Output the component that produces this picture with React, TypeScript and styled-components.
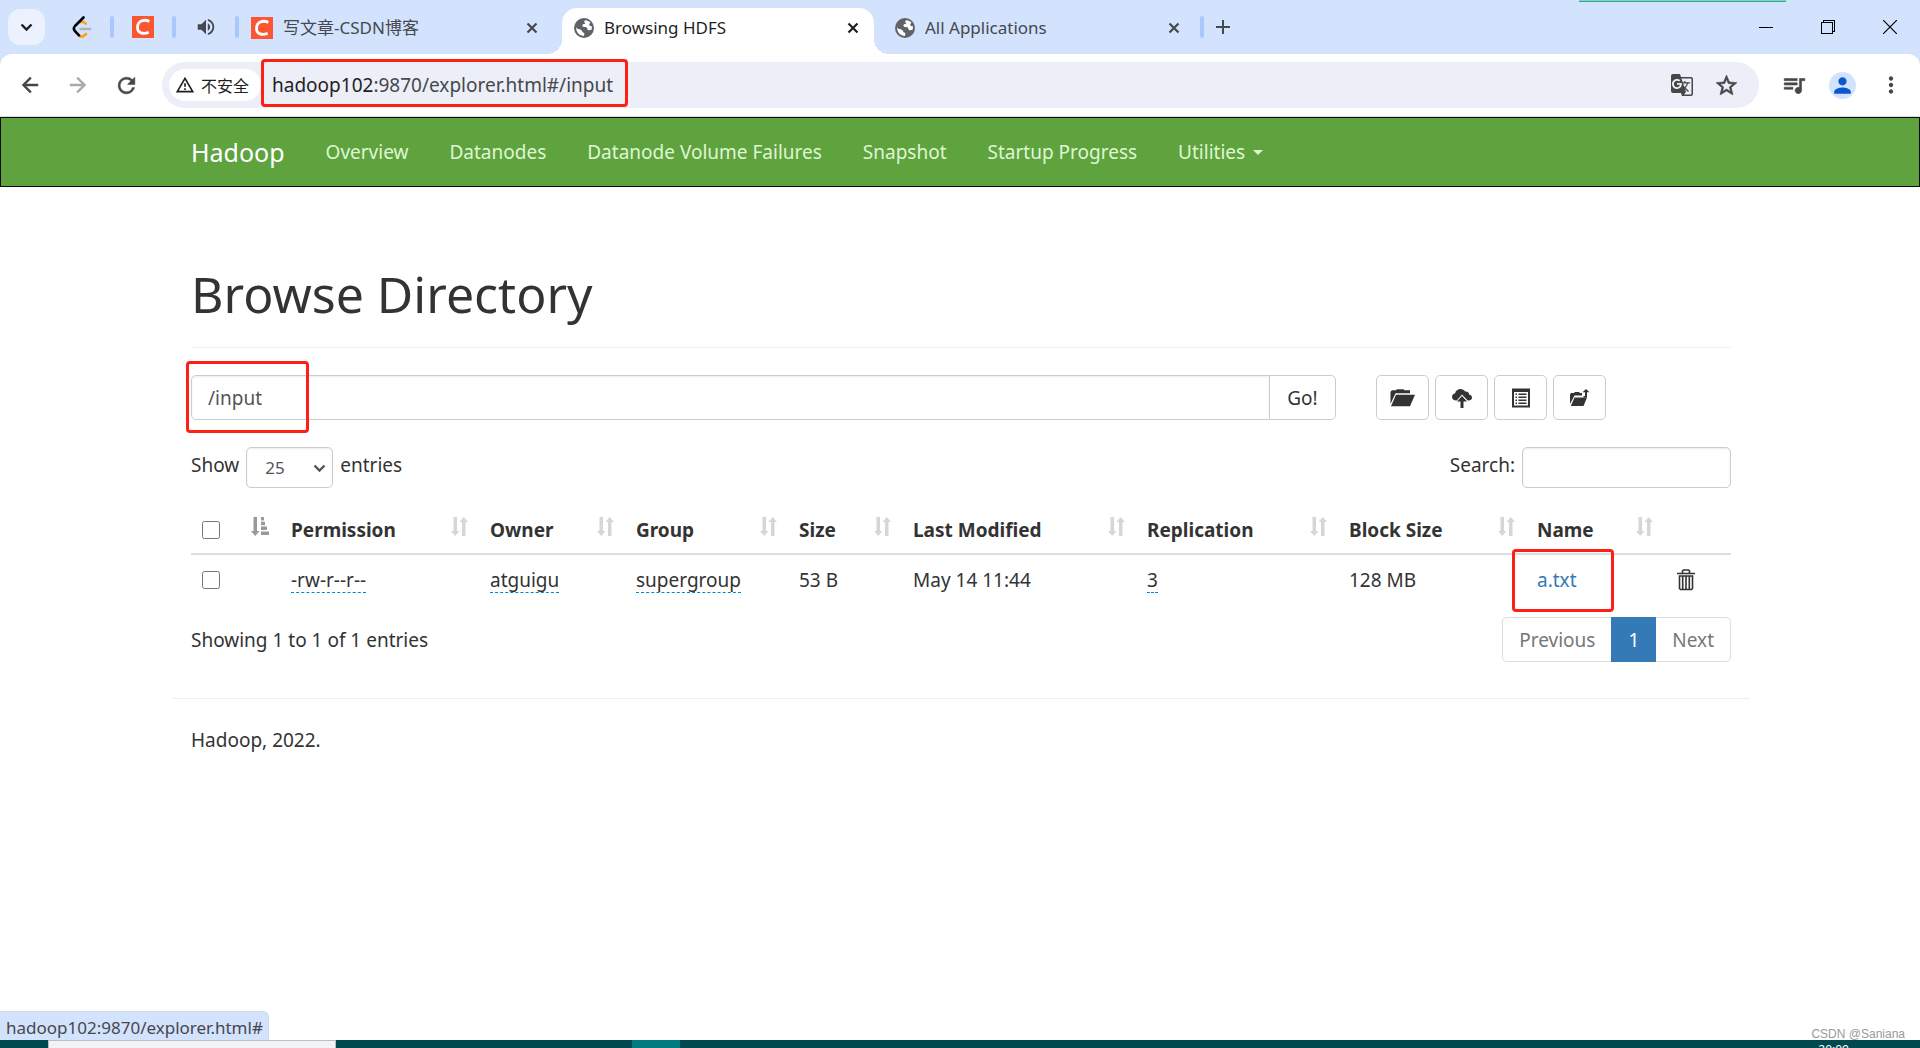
import React from "react";
import styled, { createGlobalStyle } from "styled-components";
import {
  MdArrowBack,
  MdArrowForward,
  MdGTranslate,
  MdMoreVert,
  MdOutlineWarningAmber,
  MdPerson,
  MdQueueMusic,
  MdRefresh,
  MdStarBorder,
  MdVolumeUp,
} from "react-icons/md";

const sans = `"Noto Sans", "Noto Sans CJK SC", sans-serif`;
const cjk = `"Noto Sans CJK SC", "Noto Sans", sans-serif`;

const GlobalStyle = createGlobalStyle`
  * { box-sizing: border-box; }
  body { margin: 0; background: #fff; color: #333; font: 19px/28px ${sans}; }
  button, input, select { font: inherit; color: inherit; margin: 0; }
  a { text-decoration: none; color: inherit; }
  svg { display: block; flex: none; }
`;

const Screen = styled.div`
  position: relative;
  display: flex;
  flex-direction: column;
  min-height: 100vh;
  overflow: hidden;
`;

/* ---------- browser chrome ---------- */

const BareButton = styled.button`
  display: flex;
  align-items: center;
  justify-content: center;
  flex: none;
  width: 24px;
  height: 24px;
  padding: 0;
  border: 0;
  background: none;
  /* the icon set's invisible bounding square must not pick up the stroke */
  path[fill="none"] {
    stroke: none;
  }
`;

const TabStrip = styled.div`
  position: relative;
  display: flex;
  align-items: flex-end;
  height: 54px;
  background: #d3e2fd;
  color: #45484c;
  font-size: 17px;
  line-height: 24px;
`;

const RecentTile = styled.a`
  position: absolute;
  top: 0;
  right: 134px;
  width: 207px;
  height: 2px;
  background: #6adfc0;
  border-bottom: 1px solid #4d9f8b;
`;

const TabSearch = styled(BareButton)`
  width: 37px;
  height: 36px;
  margin: 0 0 9px 8px;
  border-radius: 12px;
  background: #ebf2fe;
  color: #1c1d1f;
`;

const PinnedTab = styled.button<{ $width: number; $start?: number }>`
  display: flex;
  align-items: center;
  justify-content: center;
  width: ${(p) => p.$width}px;
  height: 54px;
  padding: 0 0 0 ${(p) => p.$start ?? 0}px;
  border: 0;
  background: none;
`;

const Divider = styled.span`
  width: 4px;
  height: 22px;
  margin-bottom: 16px;
  border-radius: 2px;
  background: #a8c7fa;
`;

const Tab = styled.div<{ $active?: boolean; $width: number; $start: number; $end: number }>`
  position: relative;
  display: flex;
  align-items: center;
  gap: 10px;
  width: ${(p) => p.$width}px;
  height: 46px;
  padding: 0 ${(p) => p.$end}px 7px ${(p) => p.$start}px;
  border-radius: 15px 15px 0 0;
  background: ${(p) => (p.$active ? "#fff" : "transparent")};
  color: ${(p) => (p.$active ? "#1f1f1f" : "#45484c")};
  &::before,
  &::after {
    content: "";
    display: ${(p) => (p.$active ? "block" : "none")};
    position: absolute;
    bottom: 0;
    width: 15px;
    height: 15px;
  }
  &::before {
    left: -15px;
    background: radial-gradient(circle at 0 0, transparent 15px, #fff 15px);
  }
  &::after {
    right: -15px;
    background: radial-gradient(circle at 100% 0, transparent 15px, #fff 15px);
  }
`;

const TabTitle = styled.span`
  flex: 1;
  white-space: nowrap;
  overflow: hidden;
`;

const CsdnLogo = styled.span`
  display: flex;
  width: 22px;
  height: 22px;
  background: #fc5531;
`;

const WindowButtons = styled.div`
  display: flex;
  align-items: center;
  gap: 38px;
  height: 54px;
  margin-left: auto;
  padding-right: 18px;
  color: #000;
`;

const Toolbar = styled.div`
  background: #d3e2fd;
  color: #474747;
`;

const ToolbarInner = styled.div`
  display: flex;
  align-items: center;
  height: 63px;
  padding: 0 17px 1px 18px;
  border-radius: 12px 12px 0 0;
  background: #fff;
  box-shadow: inset 0 -1px #dcdee2;
`;

const NavButtons = styled.div`
  display: flex;
  gap: 24px;
  margin-right: 24px;
`;

const Omnibox = styled.div`
  position: relative;
  display: flex;
  align-items: center;
  flex: 1;
  height: 46px;
  margin-right: 23px;
  padding: 0 21px 0 7px;
  border-radius: 23px;
  background: #eceef8;
`;

const SecurityChip = styled.button`
  display: flex;
  align-items: center;
  gap: 6px;
  height: 32px;
  width: 92px;
  padding: 0 6px;
  border: 0;
  border-radius: 16px;
  background: #fff;
  color: #1f1f1f;
  font: 16px/24px ${cjk};
  white-space: nowrap;
`;

const Address = styled.div`
  flex: 1;
  margin-left: 11px;
  color: #46484c;
  b {
    font-weight: 400;
    color: #1f1f1f;
  }
`;

const OmniActions = styled.div`
  display: flex;
  gap: 20px;
`;

const RightActions = styled.div`
  display: flex;
  align-items: center;
  gap: 23px;
`;

const Avatar = styled(BareButton)`
  width: 27px;
  height: 27px;
  border-radius: 50%;
  background: #d3e3fd;
  color: #0b57d0;
`;

/* Red outline drawn over the part that the article points at. */
const Marker = styled.span<{ $top: number; $left: number; $width: number; $height: number }>`
  position: absolute;
  top: ${(p) => p.$top}px;
  left: ${(p) => p.$left}px;
  width: ${(p) => p.$width}px;
  height: ${(p) => p.$height}px;
  border: 3px solid #ff2015;
  border-radius: 4px;
  pointer-events: none;
`;

/* ---------- page ---------- */

const Navbar = styled.nav`
  border: 1px solid #080808;
  background: #5fa33e;
`;

const Container = styled.div`
  width: 100%;
  max-width: 1580px;
  margin: 0 auto;
  padding: 0 19px 0 21px;
`;

const NavRow = styled(Container)`
  display: flex;
  align-items: center;
  height: 68px;
  gap: 41px;
  color: #dff6d3;
`;

const Brand = styled.a`
  font-size: 25px;
  color: #fff;
`;

const NavLink = styled.a`
  display: flex;
  align-items: center;
  gap: 8px;
  white-space: nowrap;
`;

const Caret = styled.span`
  border: 5px solid transparent;
  border-top-color: currentColor;
  border-bottom: 0;
`;

const PageHeader = styled.header`
  margin: 77px 0 27px;
  padding-bottom: 23px;
  border-bottom: 1px solid #eee;
  h1 {
    margin: 0;
    font-size: 50px;
    font-weight: 400;
    line-height: 60px;
  }
`;

const PathRow = styled.div`
  display: flex;
  gap: 40px;
  margin-bottom: 27px;
`;

const PathGroup = styled.form`
  position: relative;
  display: flex;
  width: 1145px;
`;

const Field = styled.input`
  min-width: 0;
  border: 1px solid #ccc;
  border-radius: 5px;
  background: #fff;
  box-shadow: inset 0 1px 2px rgba(0, 0, 0, 0.08);
  color: #555;
`;

const PathField = styled(Field)`
  flex: 1;
  height: 45px;
  padding: 0 16px;
  border-radius: 5px 0 0 5px;
`;

const SearchField = styled(Field)`
  width: 209px;
  height: 41px;
  padding: 0 12px;
`;

const Button = styled.button`
  display: flex;
  align-items: center;
  justify-content: center;
  width: 53px;
  height: 45px;
  padding: 0;
  border: 1px solid #ccc;
  border-radius: 5px;
  background: #fff;
`;

const GoButton = styled(Button)`
  width: 67px;
  margin-left: -1px;
  border-radius: 0 5px 5px 0;
`;

const ButtonRow = styled.div`
  display: flex;
  gap: 6px;
`;

const ControlRow = styled.div`
  display: flex;
  justify-content: space-between;
  margin-bottom: 19px;
`;

const ControlLabel = styled.label`
  display: flex;
  align-items: flex-start;
  gap: 7px;
  line-height: 36px;
`;

const SelectBox = styled.span`
  position: relative;
  color: #555;
  svg {
    position: absolute;
    right: 7px;
    top: 17px;
    pointer-events: none;
  }
`;

const Select = styled.select`
  display: block;
  width: 87px;
  height: 41px;
  padding: 0 18px;
  border: 1px solid #ccc;
  border-radius: 5px;
  appearance: none;
  background: #fff;
  box-shadow: inset 0 1px 2px rgba(0, 0, 0, 0.08);
  font-size: 17px;
`;

const TableWrap = styled.div`
  position: relative;
`;

const Table = styled.table`
  width: 100%;
  border-collapse: collapse;
  table-layout: fixed;
  th,
  td {
    padding: 0 10px;
    text-align: left;
    white-space: nowrap;
  }
  th {
    height: 47px;
    font-weight: 700;
    border-bottom: 2px solid #ddd;
  }
  td {
    height: 52px;
    padding-bottom: 2px;
  }
`;

const HeadCell = styled.div`
  display: flex;
  align-items: center;
  justify-content: space-between;
  min-height: 28px;
  padding-right: 2px;
  svg {
    align-self: flex-start;
    margin-top: 1px;
  }
`;

const Check = styled.input`
  display: block;
  width: 18px;
  height: 18px;
  margin-left: 1px;
`;

const Editable = styled.a`
  display: inline-block;
  line-height: 24px;
  border-bottom: 1px dashed #08c;
`;

const FileLink = styled.a`
  color: #337ab7;
`;

const TrashButton = styled(BareButton)`
  width: 22px;
`;

const InfoRow = styled.div`
  display: flex;
  justify-content: space-between;
  align-items: center;
  margin: 11px 0 36px;
`;

const Pager = styled.nav`
  display: flex;
`;

const PageLink = styled.a<{ $active?: boolean }>`
  height: 45px;
  padding: 0 16px;
  border: 1px solid ${(p) => (p.$active ? "#337ab7" : "#ddd")};
  background: ${(p) => (p.$active ? "#337ab7" : "#fff")};
  color: ${(p) => (p.$active ? "#fff" : "#777")};
  line-height: 44px;
  &:not(:first-child) {
    border-left-width: ${(p) => (p.$active ? 1 : 0)}px;
  }
  &:first-child {
    border-right: 0;
    border-radius: 5px 0 0 5px;
  }
  &:last-child {
    border-radius: 0 5px 5px 0;
  }
`;

const Footer = styled.footer`
  margin: 0 -19px;
  padding: 27px 19px;
  border-top: 1px solid #eee;
`;

/* ---------- desktop edge ---------- */

const BottomArea = styled.div`
  display: flex;
  align-items: flex-end;
  justify-content: space-between;
  margin-top: auto;
`;

const StatusBubble = styled.div`
  height: 29px;
  padding: 0 5px 0 6px;
  border-top: 1px solid #d5d9e0;
  border-right: 1px solid #d5d9e0;
  border-radius: 0 6px 0 0;
  background: #d3e2fd;
  color: #46484c;
  font-size: 17px;
  line-height: 32px;
`;

const Watermark = styled.div`
  margin-right: 15px;
  color: #999;
  font: 12px/12px "Liberation Sans", sans-serif;
`;

const Taskbar = styled.div`
  display: flex;
  height: 8px;
  overflow: hidden;
  background: #004a4f;
`;

const TaskSearch = styled.div`
  width: 288px;
  margin-left: 48px;
  border: 1px solid #b9bfbf;
  border-bottom: 0;
  background: #f0f4f5;
`;

const TaskApp = styled.div`
  width: 48px;
  margin-left: 296px;
  background: #007b80;
`;

const Clock = styled.time`
  margin: 2px 71px 0 auto;
  color: #fff;
  font-size: 12px;
  line-height: 16px;
`;

/* ---------- drawings ---------- */

const CloseIcon = () => (
  <svg width="12" height="12" viewBox="0 0 12 12" stroke="currentColor" strokeWidth="2.2">
    <path d="M1.5 1.5l9 9M10.5 1.5l-9 9" />
  </svg>
);

const ChevronIcon = () => (
  <svg width="13" height="9" viewBox="0 0 13 9" fill="none" stroke="currentColor" strokeWidth="2.4">
    <path d="M1.5 1.5l5 5 5-5" />
  </svg>
);

const GlobeIcon = () => (
  <svg width="20" height="20" viewBox="0 0 20 20">
    <circle cx="10" cy="10" r="10" fill="#5f6368" />
    <path
      d="M11.5 2.2c-1.500.4-1.800 1.600-.8 2.300.8.5.3 1.500-.8 1.600-1.300.1-1.600 1.100-1.400 2 .2.900 1.200 1 2.600 1 1.500 0 2.200.7 2.300 1.900.1 1.200 1.300 1.500 2.700 1.100l1.400-.3c.4-1 .5-2.600.2-3.800-.9.300-1.900.1-2.300-.8-.5-1.200.2-2.100 1.200-2.500-1.300-1.500-3.200-2.400-5.100-2.500zM2.100 9c.2 1 1 1.700 2.300 2.100 1.500.4 3.300.7 3.600 2 .3 1.200.9 1.300 1.800 1.600.9.400.6 1.600.1 3.200-4.300 0-8-3.600-7.800-8.900z"
      fill="#fff"
    />
  </svg>
);

const LeetIcon = () => (
  <svg width="20" height="22" viewBox="0 0 20 22" fill="none" strokeWidth="2.6" strokeLinecap="round">
    <path d="M8.5 6.2c1.6-1.2 3.2-.6 5.2 1.5" stroke="#ffa116" />
    <path d="M14 18l-2 1.7c-1.5 1.2-3.5 1-5-.3" stroke="#ffa116" />
    <path d="M8.5 13h9.5" stroke="#b3b3b3" />
    <path d="M11.5 1.5L3 10c-1.5 1.7-1.5 3.5 0 5.2l4 4.2" stroke="#000" />
  </svg>
);

const CsdnIcon = () => (
  <CsdnLogo>
    <svg width="22" height="22" viewBox="0 0 22 22" fill="none" stroke="#fff" strokeWidth="2.8">
      <path d="M17.3 5.4C12 2.6 5.5 5.2 5.5 11.4c0 5.8 6 7.3 11.2 4.9" />
    </svg>
  </CsdnLogo>
);

const MinimizeIcon = () => (
  <svg width="14" height="14" viewBox="0 0 14 14" stroke="currentColor" shapeRendering="crispEdges">
    <path d="M0 7.5h14" />
  </svg>
);

const RestoreIcon = () => (
  <svg width="14" height="14" viewBox="0 0 14 14" fill="none" stroke="currentColor" shapeRendering="crispEdges">
    <path d="M.5 2.5h11v11H.5zM2.5 2.5v-2h11v11h-2" />
  </svg>
);

const WindowCloseIcon = () => (
  <svg width="14" height="14" viewBox="0 0 14 14" stroke="currentColor" strokeWidth="1.2">
    <path d="M0 0l14 14M14 0L0 14" />
  </svg>
);

const PlusIcon = () => (
  <svg width="14" height="14" viewBox="0 0 14 14" stroke="currentColor" strokeWidth="2">
    <path d="M7 0v14M0 7h14" />
  </svg>
);

const SortIcon = () => (
  <svg width="17" height="20" viewBox="0 0 17 20" fill="#d6d6d6">
    <path d="M2.500 0h3.500v14h2.500l-4.250 5L0 14h2.500zM11 19V5H8.500l4.250-5L17 5h-2.500v14z" />
  </svg>
);

const SortAscIcon = () => (
  <svg width="18" height="20" viewBox="0 0 18 20" fill="#999">
    <path d="M2.500 0h3.500v14h2.500l-4.250 5L0 14h2.500zM10 0h3v3.500h-3zM10 4.800h4v3.500h-4zM10 9.600h6v3.500h-6zM10 14.400h8v3.500h-8z" />
  </svg>
);

const FolderOpenIcon = () => (
  <svg width="25" height="18" viewBox="0 0 25 18" fill="currentColor">
    <path d="M.5 15V2.800L2 1.300h4L7 .3h6.500l1 1H20v2.900H5.500zM6 5.800h19l-5 11.400H1z" />
  </svg>
);

const CloudUploadIcon = () => (
  <svg width="20" height="20" viewBox="0 0 20 20" fill="currentColor">
    <path d="M4.5 12.5C1.500 12.500 0 10.800 0 9c0-1.900 1.500-3.200 3-3.400C3.500 2.500 6 1 8.500 1c2 0 3.700 1 4.700 2.600 2.200-.5 4 1 3.900 2.900 1.700.3 2.900 1.500 2.900 3 0 1.700-1.300 3-3.500 3h-.8L10 6.500l-5.300 6z" />
    <path d="M10 8l5 5.500h-3.500V20h-3v-6.500H5z" />
  </svg>
);

const ListIcon = () => (
  <svg width="18" height="20" viewBox="0 0 18 20" fill="currentColor">
    <path fillRule="evenodd" d="M0 .5h18v19H0zM2 4v13.500h14V4z" />
    <path d="M3.500 5.500H5V7H3.500zM6.500 5.500h8V7h-8zM3.500 8.500H5V10H3.500zM6.500 8.500h8V10h-8zM3.500 11.500H5V13H3.500zM6.500 11.500h8V13h-8zM3.500 14.500H5V16H3.500zM6.500 14.500h8V16h-8z" />
  </svg>
);

const FolderMoveIcon = () => (
  <svg width="20" height="18" viewBox="0 0 20 18" fill="currentColor">
    <path d="M0 15V5.500L1 4h3l1-1h4l1 1h2v2.500H4.500zM4.500 8.500H17L13.500 17H.8z" />
    <path d="M16 0l3.500 3.300H17V8.500h-3.500V7H15V3.300h-2.500z" />
  </svg>
);

const TrashIcon = () => (
  <svg width="18" height="22" viewBox="0 0 18 22" fill="none" stroke="currentColor" strokeWidth="1.6">
    <path d="M0 4.500h18M5.500 4V2l1-1h5l1 1v2M2.500 7h13v12.500l-1 1h-11l-1-1zM5.700 7v13M9 7v13M12.300 7v13" />
  </svg>
);

/* ---------- data ---------- */

const navItems = ["Overview", "Datanodes", "Datanode Volume Failures", "Snapshot", "Startup Progress"];

const columns = [
  { name: "Permission", width: 199 },
  { name: "Owner", width: 146 },
  { name: "Group", width: 163 },
  { name: "Size", width: 114 },
  { name: "Last Modified", width: 234 },
  { name: "Replication", width: 202 },
  { name: "Block Size", width: 188 },
  { name: "Name", width: 138 },
];

export default function App() {
  return (
    <Screen>
      <GlobalStyle />
      <TabStrip>
        <TabSearch aria-label="Search tabs">
          <ChevronIcon />
        </TabSearch>
        <PinnedTab $width={65} $start={8} aria-label="LeetCode">
          <LeetIcon />
        </PinnedTab>
        <Divider />
        <PinnedTab $width={58} aria-label="CSDN">
          <CsdnIcon />
        </PinnedTab>
        <Divider />
        <PinnedTab $width={59} aria-label="Playing audio">
          <MdVolumeUp size={22} color="#45484c" />
        </PinnedTab>
        <Divider />
        <Tab $width={323} $start={12} $end={18}>
          <CsdnIcon />
          <TabTitle>写文章-CSDN博客</TabTitle>
          <BareButton aria-label="Close tab">
            <CloseIcon />
          </BareButton>
        </Tab>
        <Tab $width={312} $start={12} $end={9} $active>
          <GlobeIcon />
          <TabTitle>Browsing HDFS</TabTitle>
          <BareButton aria-label="Close tab">
            <CloseIcon />
          </BareButton>
        </Tab>
        <Tab $width={326} $start={21} $end={14}>
          <GlobeIcon />
          <TabTitle>All Applications</TabTitle>
          <BareButton aria-label="Close tab">
            <CloseIcon />
          </BareButton>
        </Tab>
        <Divider />
        <PinnedTab $width={38} aria-label="New tab">
          <PlusIcon />
        </PinnedTab>
        <WindowButtons>
          <BareButton aria-label="Minimize">
            <MinimizeIcon />
          </BareButton>
          <BareButton aria-label="Restore">
            <RestoreIcon />
          </BareButton>
          <BareButton aria-label="Close window">
            <WindowCloseIcon />
          </BareButton>
        </WindowButtons>
        <RecentTile href="#" aria-label="Screen share" />
      </TabStrip>

      <Toolbar>
        <ToolbarInner>
          <NavButtons>
            <BareButton aria-label="Back">
              <MdArrowBack size={24} stroke="currentColor" strokeWidth={0.5} />
            </BareButton>
            <BareButton aria-label="Forward">
              <MdArrowForward size={24} color="#aaa" stroke="currentColor" strokeWidth={0.5} />
            </BareButton>
            <BareButton aria-label="Reload">
              <MdRefresh size={25} stroke="currentColor" strokeWidth={0.5} />
            </BareButton>
          </NavButtons>
          <Omnibox>
            <SecurityChip>
              <MdOutlineWarningAmber size={20} />
              不安全
            </SecurityChip>
            <Address>
              <b>hadoop102</b>:9870/explorer.html#/input
            </Address>
            <OmniActions>
              <BareButton aria-label="Translate">
                <MdGTranslate size={24} />
              </BareButton>
              <BareButton aria-label="Bookmark">
                <MdStarBorder size={25} stroke="currentColor" strokeWidth={0.6} />
              </BareButton>
            </OmniActions>
            <Marker $top={-3} $left={99} $width={367} $height={48} />
          </Omnibox>
          <RightActions>
            <BareButton aria-label="Media">
              <MdQueueMusic size={26} stroke="currentColor" strokeWidth={0.5} />
            </BareButton>
            <Avatar aria-label="Profile">
              <MdPerson size={25} />
            </Avatar>
            <BareButton aria-label="Menu">
              <MdMoreVert size={26} />
            </BareButton>
          </RightActions>
        </ToolbarInner>
      </Toolbar>

      <Navbar>
        <NavRow>
          <Brand href="#">Hadoop</Brand>
          {navItems.map((item) => (
            <NavLink href="#" key={item}>
              {item}
            </NavLink>
          ))}
          <NavLink href="#">
            Utilities
            <Caret />
          </NavLink>
        </NavRow>
      </Navbar>

      <Container as="main">
        <PageHeader>
          <h1>Browse Directory</h1>
        </PageHeader>

        <PathRow>
          <PathGroup>
            <PathField aria-label="Directory" defaultValue="/input" />
            <GoButton type="button">Go!</GoButton>
            <Marker $top={-14} $left={-5} $width={123} $height={72} />
          </PathGroup>
          <ButtonRow>
            <Button aria-label="Create directory">
              <FolderOpenIcon />
            </Button>
            <Button aria-label="Upload files">
              <CloudUploadIcon />
            </Button>
            <Button aria-label="Cut and paste">
              <ListIcon />
            </Button>
            <Button aria-label="Parent directory">
              <FolderMoveIcon />
            </Button>
          </ButtonRow>
        </PathRow>

        <ControlRow>
          <ControlLabel>
            Show
            <SelectBox>
              <Select defaultValue="25">
                <option>25</option>
                <option>50</option>
                <option>100</option>
              </Select>
              <ChevronIcon />
            </SelectBox>
            entries
          </ControlLabel>
          <ControlLabel>
            Search:
            <SearchField type="search" />
          </ControlLabel>
        </ControlRow>

        <TableWrap>
          <Table>
            <colgroup>
              <col width={90} />
              {columns.map((c) => (
                <col key={c.name} width={c.width} />
              ))}
              <col width={66} />
            </colgroup>
            <thead>
              <tr>
                <th>
                  <HeadCell>
                    <Check type="checkbox" aria-label="Select all" />
                    <SortAscIcon />
                  </HeadCell>
                </th>
                {columns.map((c) => (
                  <th key={c.name}>
                    <HeadCell>
                      {c.name}
                      <SortIcon />
                    </HeadCell>
                  </th>
                ))}
                <th />
              </tr>
            </thead>
            <tbody>
              <tr>
                <td>
                  <Check type="checkbox" aria-label="Select a.txt" />
                </td>
                <td>
                  <Editable href="#">-rw-r--r--</Editable>
                </td>
                <td>
                  <Editable href="#">atguigu</Editable>
                </td>
                <td>
                  <Editable href="#">supergroup</Editable>
                </td>
                <td>53 B</td>
                <td>May 14 11:44</td>
                <td>
                  <Editable href="#">3</Editable>
                </td>
                <td>128 MB</td>
                <td>
                  <FileLink href="#">a.txt</FileLink>
                </td>
                <td>
                  <TrashButton aria-label="Delete">
                    <TrashIcon />
                  </TrashButton>
                </td>
              </tr>
            </tbody>
          </Table>
          <Marker $top={42} $left={1321} $width={102} $height={63} />
        </TableWrap>

        <InfoRow>
          Showing 1 to 1 of 1 entries
          <Pager>
            <PageLink href="#">Previous</PageLink>
            <PageLink href="#" $active>
              1
            </PageLink>
            <PageLink href="#">Next</PageLink>
          </Pager>
        </InfoRow>

        <Footer>Hadoop, 2022.</Footer>
      </Container>

      <BottomArea>
        <StatusBubble>hadoop102:9870/explorer.html#</StatusBubble>
        <Watermark>CSDN @Saniana</Watermark>
      </BottomArea>
      <Taskbar>
        <TaskSearch />
        <TaskApp />
        <Clock>20:09</Clock>
      </Taskbar>
    </Screen>
  );
}
